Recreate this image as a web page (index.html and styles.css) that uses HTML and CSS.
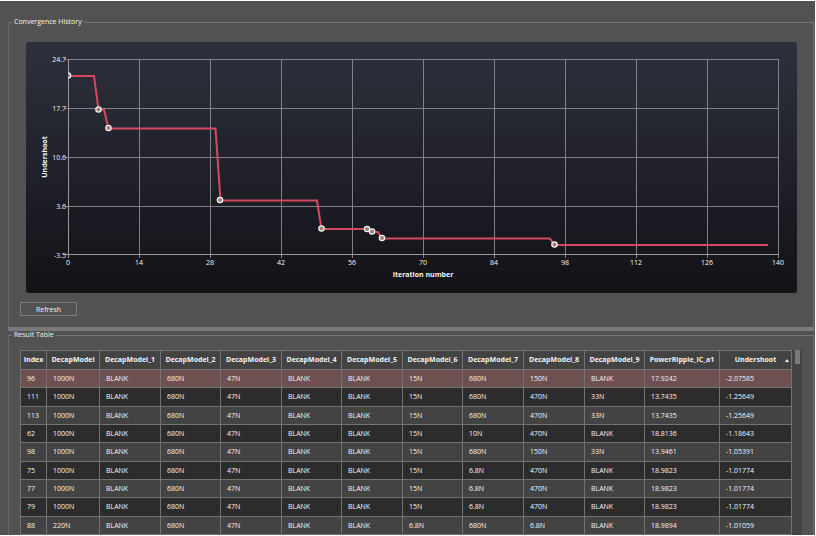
FILE: index.html
```html
<!DOCTYPE html>
<html lang="en">
<head>
  <meta charset="UTF-8">
  <meta name="viewport" content="width=device-width, initial-scale=1.0">
  <title>Convergence History</title>
  <link rel="stylesheet" href="styles.css">
</head>
<body>
  <main class="window">
    <fieldset class="group history">
      <legend>Convergence History</legend>
      <svg class="chart" viewBox="0 0 771 251" role="img" aria-label="Undershoot by iteration number">
        <defs>
          <linearGradient id="chart-bg" x1="0" y1="0" x2="0" y2="1">
            <stop offset="0" stop-color="#2e313c"/>
            <stop offset="0.5" stop-color="#20212a"/>
            <stop offset="1" stop-color="#121217"/>
          </linearGradient>
          <clipPath id="plot">
            <rect x="42" y="17" width="711" height="197"/>
          </clipPath>
        </defs>
        <rect width="771" height="251" rx="3" fill="url(#chart-bg)"/>
        <path class="grid" d="M113.5 17V216M184.5 17V216M255.5 17V216M326.5 17V216M397.5 17V216M468.5 17V216M539.5 17V216M610.5 17V216M681.5 17V216M752.5 17V216M39 17.5H753M39 66.5H753M39 115.5H753M39 164.5H753"/>
        <path class="axis" d="M42.5 17V216M39 212.5H753"/>
        <g clip-path="url(#plot)">
          <polyline class="line" points="42,34 68,34 72.5,67.5 78,67.5 82.5,86.5 189.5,86.5 194.5,158.5 291,158.5 295.5,187 341,187 346,190 352,190 356,196.5 524,196.5 528.5,203 742,203"/>
          <g class="points">
            <circle cx="42" cy="33.5" r="2.7"/>
            <circle cx="72.5" cy="67.5" r="2.7"/>
            <circle cx="82.5" cy="86" r="2.7"/>
            <circle cx="194" cy="158" r="2.7"/>
            <circle cx="295.5" cy="186.5" r="2.7"/>
            <circle cx="341" cy="187" r="2.7"/>
            <circle cx="346" cy="189.5" r="2.7"/>
            <circle cx="356" cy="196" r="2.7"/>
            <circle cx="528.5" cy="202.5" r="2.7"/>
          </g>
        </g>
        <g class="y-labels">
          <text x="40" y="20">24.7</text>
          <text x="40" y="69">17.7</text>
          <text x="40" y="118">10.6</text>
          <text x="40" y="167">3.6</text>
          <text x="40" y="216">-3.5</text>
        </g>
        <g class="x-labels">
          <text x="42" y="223">0</text>
          <text x="113" y="223">14</text>
          <text x="184" y="223">28</text>
          <text x="255" y="223">42</text>
          <text x="326" y="223">56</text>
          <text x="397" y="223">70</text>
          <text x="468" y="223">84</text>
          <text x="539" y="223">98</text>
          <text x="610" y="223">112</text>
          <text x="681" y="223">126</text>
          <text x="752" y="223">140</text>
        </g>
        <text class="axis-title" x="397" y="235">Iteration number</text>
        <text class="axis-title" transform="translate(21 115) rotate(-90)">Undershoot</text>
      </svg>
      <button type="button" class="refresh">Refresh</button>
    </fieldset>

    <div class="splitter"></div>

    <fieldset class="group results">
      <legend>Result Table</legend>
      <div class="table-view">
        <table>
          <colgroup>
            <col class="c-index"><col class="c-first">
            <col class="c-wide"><col class="c-model"><col class="c-wide"><col class="c-model"><col class="c-wide">
            <col class="c-model"><col class="c-wide"><col class="c-wide"><col class="c-model">
            <col class="c-ripple"><col class="c-under">
          </colgroup>
          <thead>
            <tr>
              <th>Index</th><th>DecapModel</th><th>DecapModel_1</th><th>DecapModel_2</th><th>DecapModel_3</th><th>DecapModel_4</th><th>DecapModel_5</th><th>DecapModel_6</th><th>DecapModel_7</th><th>DecapModel_8</th><th>DecapModel_9</th><th>PowerRipple_IC_a1</th>
              <th aria-sort="ascending"><div class="sorted">Undershoot<svg class="arrow" viewBox="0 0 4 3"><path d="M2 0L4 3H0z"/></svg></div></th>
            </tr>
          </thead>
          <tbody>
            <tr class="selected"><td>96</td><td>1000N</td><td>BLANK</td><td>680N</td><td>47N</td><td>BLANK</td><td>BLANK</td><td>15N</td><td>680N</td><td>150N</td><td>BLANK</td><td>17.9242</td><td>-2.07585</td></tr>
            <tr><td>111</td><td>1000N</td><td>BLANK</td><td>680N</td><td>47N</td><td>BLANK</td><td>BLANK</td><td>15N</td><td>680N</td><td>470N</td><td>33N</td><td>13.7435</td><td>-1.25649</td></tr>
            <tr><td>113</td><td>1000N</td><td>BLANK</td><td>680N</td><td>47N</td><td>BLANK</td><td>BLANK</td><td>15N</td><td>680N</td><td>470N</td><td>33N</td><td>13.7435</td><td>-1.25649</td></tr>
            <tr><td>62</td><td>1000N</td><td>BLANK</td><td>680N</td><td>47N</td><td>BLANK</td><td>BLANK</td><td>15N</td><td>10N</td><td>470N</td><td>BLANK</td><td>18.8136</td><td>-1.18643</td></tr>
            <tr><td>98</td><td>1000N</td><td>BLANK</td><td>680N</td><td>47N</td><td>BLANK</td><td>BLANK</td><td>15N</td><td>680N</td><td>150N</td><td>33N</td><td>13.9461</td><td>-1.05391</td></tr>
            <tr><td>75</td><td>1000N</td><td>BLANK</td><td>680N</td><td>47N</td><td>BLANK</td><td>BLANK</td><td>15N</td><td>6.8N</td><td>470N</td><td>BLANK</td><td>18.9823</td><td>-1.01774</td></tr>
            <tr><td>77</td><td>1000N</td><td>BLANK</td><td>680N</td><td>47N</td><td>BLANK</td><td>BLANK</td><td>15N</td><td>6.8N</td><td>470N</td><td>BLANK</td><td>18.9823</td><td>-1.01774</td></tr>
            <tr><td>79</td><td>1000N</td><td>BLANK</td><td>680N</td><td>47N</td><td>BLANK</td><td>BLANK</td><td>15N</td><td>6.8N</td><td>470N</td><td>BLANK</td><td>18.9823</td><td>-1.01774</td></tr>
            <tr><td>88</td><td>220N</td><td>BLANK</td><td>680N</td><td>47N</td><td>BLANK</td><td>BLANK</td><td>6.8N</td><td>680N</td><td>6.8N</td><td>BLANK</td><td>18.9894</td><td>-1.01059</td></tr>
          </tbody>
        </table>
        <div class="scrollbar"><div class="thumb"></div></div>
      </div>
    </fieldset>
  </main>
</body>
</html>
```
FILE: styles.css
```css
* {
  box-sizing: border-box;
}
body {
  margin: 0;
  background: #fff;
  color: #f4f4f4;
  font-family: "Open Sans", "Noto Sans", sans-serif;
  font-size: 7px;
}
.window {
  display: flex;
  flex-direction: column;
  min-height: calc(100vh - 2px);
  margin: 1px 1px 1px 0;
  padding: 17px 1px 0 8px;
  background: #525252;
}
.group {
  min-width: 0;
  margin: 0;
  border: 1px solid #737373;
  border-left-color: #666;
}
.group legend {
  margin-left: -8px;
  padding: 0 2px;
  line-height: 8px;
}
.history {
  padding: 16px 11px 11px;
  border-bottom: 0;
}
.chart {
  display: block;
  width: calc(100% - 11px);
  margin-left: 6px;
}
.grid,
.axis {
  fill: none;
  stroke: #808188;
}
.axis {
  stroke: #9a9ba1;
}
.line {
  fill: none;
  stroke: #d44a61;
  stroke-width: 2;
}
.points circle {
  fill: #a08078;
  stroke: #f4f4f4;
  stroke-width: 1.2;
}
.chart text {
  fill: #f4f4f4;
  text-anchor: middle;
}
.chart .y-labels text {
  text-anchor: end;
}
.chart .axis-title {
  font-weight: 700;
}
.refresh {
  display: block;
  width: 57px;
  height: 14px;
  margin-top: 9px;
  padding: 0;
  border: 1px solid #7c7c7c;
  background: #525252;
  color: inherit;
  font: inherit;
}
.splitter {
  height: 4px;
  background: #7a7a7a;
}
.results {
  flex: 1;
  padding: 11px 11px 0;
  border-bottom: 0;
}
.table-view {
  display: flex;
  background: #434343;
}
table {
  flex: 1;
  border-collapse: collapse;
  table-layout: fixed;
}
th,
td {
  height: 18px;
  padding: 0 0 0 6px;
  border: 1px solid #737373;
  line-height: 10px;
  text-align: left;
  white-space: nowrap;
}
th {
  height: 19px;
  padding: 0;
  font-weight: 700;
  text-align: center;
}
tbody tr:nth-child(3n + 2) td {
  height: 19px;
}
tbody tr:nth-child(even) {
  background: #2c2c2c;
}
tbody .selected {
  background: #6f5050;
}
.c-index {
  width: 26px;
}
.c-first {
  width: 53px;
}
.c-model {
  width: 60px;
}
.c-wide {
  width: 61px;
}
.c-ripple {
  width: 75px;
}
.c-under {
  width: 72px;
}
.sorted {
  display: grid;
  grid-template-columns: 1fr auto 1fr;
  align-items: center;
  padding: 0 2px;
}
.sorted::before {
  content: "";
}
.arrow {
  width: 4px;
  height: 3px;
  justify-self: end;
  fill: #f4f4f4;
}
.scrollbar {
  width: 10px;
  padding: 0 2px 0 3px;
}
.thumb {
  height: 14px;
  background: #7a7a7a;
}
```
